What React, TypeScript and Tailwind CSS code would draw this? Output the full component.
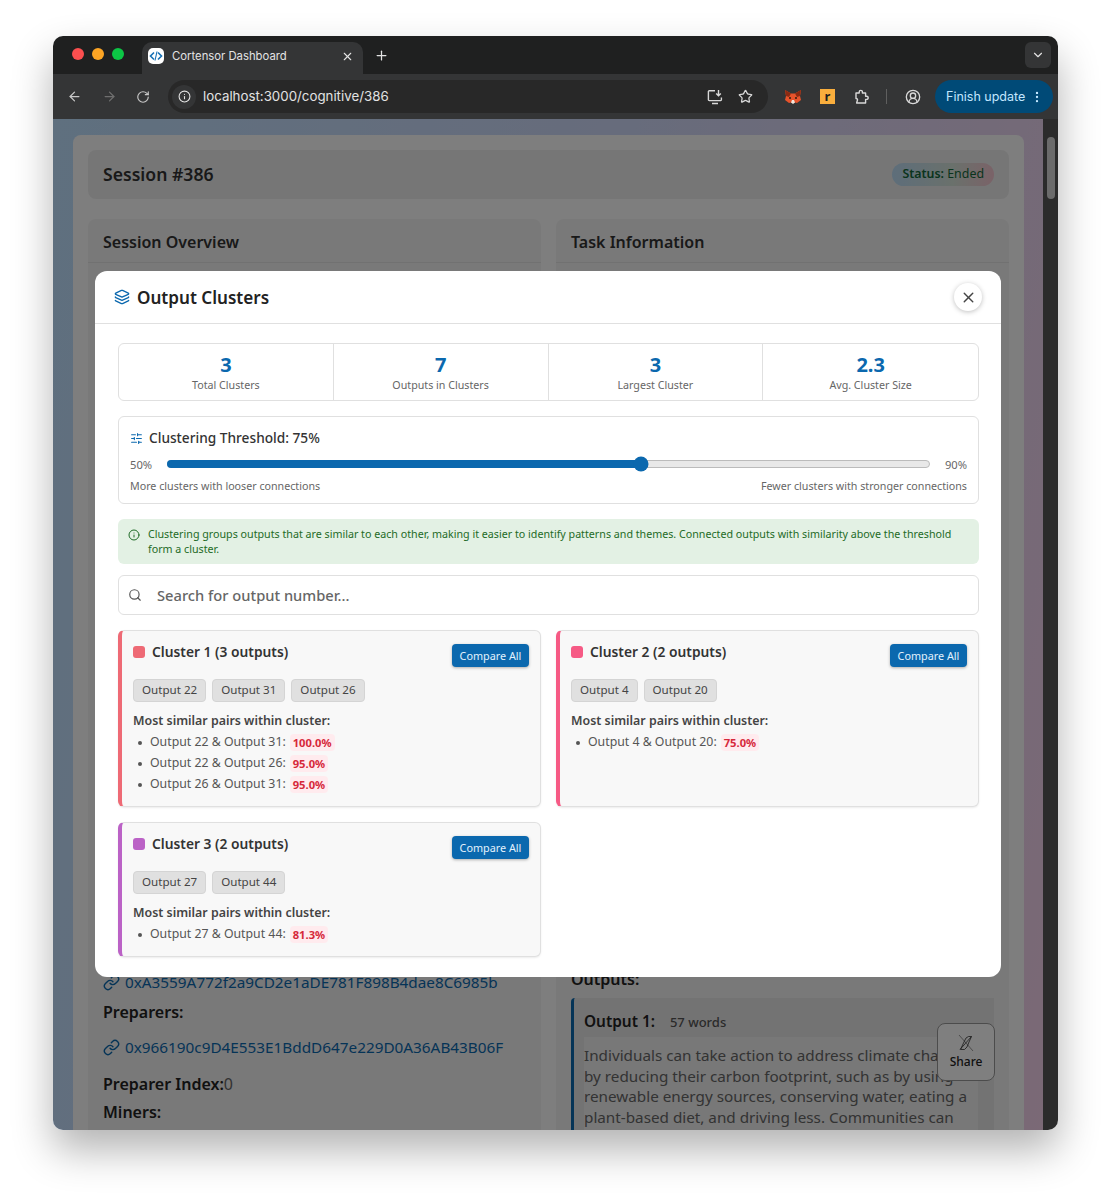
import {
  ArrowLeft,
  ArrowRight,
  ChevronDown,
  CircleUserRound,
  EllipsisVertical,
  Info,
  Layers,
  Link,
  Plus,
  RotateCw,
  Search,
  SlidersHorizontal,
  Star,
  X,
} from 'lucide-react'

const STATS = [
  { value: '3', label: 'Total Clusters' },
  { value: '7', label: 'Outputs in Clusters' },
  { value: '3', label: 'Largest Cluster' },
  { value: '2.3', label: 'Avg. Cluster Size' },
]

const CLUSTERS = [
  {
    title: 'Cluster 1 (3 outputs)',
    border: 'border-l-[#ee6a75]',
    dot: 'bg-[#ee6a75]',
    outputs: ['Output 22', 'Output 31', 'Output 26'],
    pairs: [
      { label: 'Output 22 & Output 31:', score: '100.0%' },
      { label: 'Output 22 & Output 26:', score: '95.0%' },
      { label: 'Output 26 & Output 31:', score: '95.0%' },
    ],
  },
  {
    title: 'Cluster 2 (2 outputs)',
    border: 'border-l-[#f65a85]',
    dot: 'bg-[#f65a85]',
    outputs: ['Output 4', 'Output 20'],
    pairs: [{ label: 'Output 4 & Output 20:', score: '75.0%' }],
  },
  {
    title: 'Cluster 3 (2 outputs)',
    border: 'border-l-[#bb62c6]',
    dot: 'bg-[#bb62c6]',
    outputs: ['Output 27', 'Output 44'],
    pairs: [{ label: 'Output 27 & Output 44:', score: '81.3%' }],
  },
]

function Favicon() {
  return (
    <span className="flex h-4 w-4 items-center justify-center rounded-[5px] bg-white">
      <svg width="14" height="14" viewBox="0 0 14 14" fill="none" stroke="#1670b5" strokeWidth="1.6">
        <path d="M5 3.5L1.5 7 5 10.5M9 3.5L12.5 7 9 10.5" />
        <path d="M8 2.5L6 11.5" strokeWidth="1.1" />
      </svg>
    </span>
  )
}

function FoxIcon() {
  return (
    <svg width="18" height="16" viewBox="0 0 18 16">
      <path d="M1 1l6 3.5h4L17 1l-1 6 1 4-4 3-2-.5H7L5 14l-4-3 1-4z" fill="#e8532b" />
      <path d="M1 1l6 3.5L5 8 2 7zM17 1l-6 3.5L13 8l3-1z" fill="#8c2a12" />
      <path d="M7 13.5L8 11h2l1 2.5-2 1.5z" fill="#f3e6dc" />
      <circle cx="6" cy="9" r="1" fill="#2b1a12" />
      <circle cx="12" cy="9" r="1" fill="#2b1a12" />
    </svg>
  )
}

function InstallIcon() {
  return (
    <svg width="16" height="16" viewBox="0 0 16 16" fill="none" stroke="#d8d8d8" strokeWidth="1.4">
      <path d="M8 1.7H2.2a.8.8 0 0 0-.8.8v8.3a.8.8 0 0 0 .8.8h11.4a.8.8 0 0 0 .8-.8V8.5" />
      <path d="M5 14.5h6M11.5 1v5.5M9.2 4.5l2.3 2.3 2.3-2.3" />
    </svg>
  )
}

function ExtensionIcon() {
  return (
    <svg width="16" height="16" viewBox="0 0 16 16" fill="none" stroke="#d8d8d8" strokeWidth="1.4" strokeLinejoin="round">
      <path d="M2 4h3.2V3a1.6 1.6 0 0 1 3.2 0v1h3.2v3.2h1a1.6 1.6 0 0 1 0 3.2h-1V14H2.6l.9-3v-.5c0-.5-.6-1-1.5-1z" />
    </svg>
  )
}

function BrowserChrome() {
  return (
    <>
      <div className="flex h-[38px] shrink-0 items-end bg-[#1f2020] pl-[19px] pr-[7px]">
        <div className="flex h-[38px] items-center gap-2 pb-[2px] pr-[18px]">
          <span className="h-3 w-3 rounded-full bg-[#fb4f4f]" />
          <span className="h-3 w-3 rounded-full bg-[#fda524]" />
          <span className="h-3 w-3 rounded-full bg-[#0cc645]" />
        </div>
        <div className="flex h-8 w-[221px] items-center rounded-t-[10px] bg-[#343536] pb-[4px] pl-[6px] pr-[9px] text-white">
          <Favicon />
          <span className="ml-[8px] flex-1 font-['Inter',sans-serif] text-[11.3px] text-[#e3e3e3]">Cortensor Dashboard</span>
          <X size={13} className="text-[#e3e3e3]" />
        </div>
        <div className="flex h-8 flex-1 items-center pb-[5px] pl-[11px]">
          <Plus size={15} className="text-[#e3e3e3]" />
        </div>
        <div className="mb-[6px] flex h-[26px] w-[26px] items-center justify-center rounded-md bg-[#343536]">
          <ChevronDown size={14} className="text-[#e3e3e3]" />
        </div>
      </div>
      <div className="flex h-[45px] shrink-0 items-center bg-[#343536] pl-[14px] pr-[5px] text-[#c7c7c7]">
        <ArrowLeft size={15} />
        <ArrowRight size={15} className="ml-[20px] text-[#6f6f6f]" />
        <RotateCw size={14} className="ml-[19px]" />
        <div className="ml-[18px] flex h-[33px] w-[600px] items-center rounded-full bg-[#282828] pl-1 pr-[15px]">
          <span className="flex h-6 w-6 items-center justify-center rounded-full bg-[#343536]">
            <Info size={13} className="text-[#e3e3e3]" />
          </span>
          <span className="ml-[7px] flex-1 font-['Inter',sans-serif] text-[13.3px] text-[#e3e3e3]">localhost:3000/cognitive/386</span>
          <InstallIcon />
          <Star size={15} className="ml-[15px] text-[#d8d8d8]" />
        </div>
        <span className="ml-4"><FoxIcon /></span>
        <span className="ml-[18px] flex h-[15px] w-[15px] items-center justify-center bg-[#f9ae3d] text-[13px] font-bold leading-none text-[#1f1f1f]">r</span>
        <span className="ml-[19px]"><ExtensionIcon /></span>
        <span className="ml-[16px] h-[15px] w-px bg-[#5f5f5f]" />
        <CircleUserRound size={16} className="ml-[18px] text-[#d8d8d8]" />
        <div className="ml-[14px] flex h-[33px] w-[118px] items-center justify-between rounded-full bg-[#004a77] pl-[11px] pr-[9px] pt-[1px] font-['Inter',sans-serif] text-[12.5px] text-[#c2e7ff]">
          Finish update
          <EllipsisVertical size={14} />
        </div>
      </div>
    </>
  )
}

function BackgroundPage() {
  return (
    <div className="h-[1011px] overflow-hidden bg-[linear-gradient(100deg,#bee0fe_0%,#cfd8f8_50%,#f6d2ec_100%)] pl-[20px] pr-[19px] pt-4">
      <div className="h-[1100px] rounded-t-lg bg-[#fdfdfd] px-[15px] pt-[15px]">
        <div className="flex h-[49px] items-center justify-between rounded-lg bg-[#ededed] px-[15px] pb-[1px]">
          <h1 className="text-[17.6px] font-semibold text-[#333]">Session #386</h1>
          <span className="mt-[1px] rounded-full bg-[linear-gradient(90deg,#bcdcf5,#d5e2d8_60%,#f5c5d0)] px-[10px] py-[2px] text-[12.4px] text-[#15683a]">
            <b className="font-semibold">Status:</b> Ended
          </span>
        </div>
        <div className="mt-5 grid grid-cols-2 gap-[15px]">
          <div className="h-[950px] rounded-t-lg bg-[#f2f2f2]">
            <h2 className="h-[44px] border-b border-[#e2e2e2] px-[15px] pt-[11px] text-base font-semibold text-[#333]">Session Overview</h2>
            <div className="h-[708px]" />
            <div className="px-[15px]">
              <div className="flex items-center gap-[5px] text-[15.3px] text-[#0b68ae]">
                <Link size={17} />
                0xA3559A772f2a9CD2e1aDE781F898B4dae8C6985b
              </div>
              <p className="mt-[6px] text-base font-semibold text-[#222]">Preparers:</p>
              <div className="mt-[12px] flex items-center gap-[5px] text-[15.3px] text-[#0b68ae]">
                <Link size={17} />
                0x966190c9D4E553E1BddD647e229D0A36AB43B06F
              </div>
              <p className="mt-[13px] text-base font-semibold text-[#222]">
                Preparer Index:<span className="font-normal text-[#666]">0</span>
              </p>
              <p className="mt-[4px] text-base font-semibold text-[#222]">Miners:</p>
            </div>
          </div>
          <div className="h-[950px] rounded-t-lg bg-[#f2f2f2]">
            <h2 className="h-[44px] border-b border-[#e2e2e2] px-[15px] pt-[11px] text-base font-semibold text-[#333]">Task Information</h2>
            <div className="h-[704px]" />
            <div className="px-[15px]">
              <p className="text-base font-semibold text-[#222]">Outputs:</p>
              <div className="mt-[7px] rounded-l border-l-[3px] border-[#0b68ae] bg-[#e6e6e6] pl-[10px] pr-4 pt-[12px]">
                <p className="text-[15.4px] font-semibold text-[#222]">
                  Output 1:<span className="ml-[15px] text-[13px] font-medium text-[#555]">57 words</span>
                </p>
                <p className="mt-[4px] bg-[#f0f0f0] pb-6 pt-2 text-[15.25px] leading-[20.6px] text-[#666] whitespace-nowrap">
                  Individuals can take action to address climate change
                  <br />
                  by reducing their carbon footprint, such as by using
                  <br />
                  renewable energy sources, conserving water, eating a
                  <br />
                  plant-based diet, and driving less. Communities can
                </p>
              </div>
            </div>
          </div>
        </div>
      </div>
    </div>
  )
}

function ShareButton() {
  return (
    <div className="absolute left-[884px] top-[904px] flex h-[58px] w-[58px] flex-col items-center justify-center rounded-lg border border-[#999] bg-[#fff] text-xs font-medium text-[#222]">
      <svg width="18" height="18" viewBox="0 0 18 18" fill="none" stroke="#333" strokeWidth="0.8">
        <path d="M2 1l14 16" strokeWidth="0.5" />
        <path d="M14.5 2.5L3 15.5M3.5 15.5l3-6.5L9 4l2.500-1.500h3L12 8l-2 5-2.500 2.500z" />
      </svg>
      <span className="mt-[2px]">Share</span>
    </div>
  )
}

function StatsBar() {
  return (
    <div className="grid h-[58px] grid-cols-4 rounded-md border border-[#e0e0e0]">
      {STATS.map((s, i) => (
        <div key={s.label} className={`flex flex-col items-center justify-center pt-[1px] ${i < 3 ? 'border-r border-[#e0e0e0]' : ''}`}>
          <span className="text-xl font-bold leading-[26px] text-[#0b68ae]">{s.value}</span>
          <span className="text-[10.7px] leading-[15px] text-[#666]">{s.label}</span>
        </div>
      ))}
    </div>
  )
}

function ThresholdCard() {
  return (
    <div className="mt-[15px] h-[88px] rounded-md border border-[#e0e0e0] pl-[11px] pr-[11px] pt-[11px]">
      <div className="flex items-center gap-[6px] text-[13.7px] font-medium leading-[20px] text-[#333]">
        <SlidersHorizontal size={13} className="text-[#0b68ae]" />
        Clustering Threshold: 75%
      </div>
      <div className="mt-[8px] flex items-center text-[11.2px] leading-[15px] text-[#666]">
        <span className="w-[37px] pt-[1px]">50%</span>
        <div className="relative h-2 flex-1 rounded-full border border-[#bbb] bg-[#e8e8e8]">
          <div className="absolute -left-px -top-px h-2 w-[62.3%] rounded-full bg-[#0b68ae]" />
          <div className="absolute left-[62.2%] top-1/2 h-[15px] w-[15px] -translate-x-1/2 -translate-y-1/2 rounded-full bg-[#0b68ae]" />
        </div>
        <span className="w-[37px] pt-[1px] text-right">90%</span>
      </div>
      <div className="mt-[7px] flex justify-between text-[10.7px] leading-[15px] text-[#666]">
        <span>More clusters with looser connections</span>
        <span>Fewer clusters with stronger connections</span>
      </div>
    </div>
  )
}

function ClusterCard({ cluster }: { cluster: (typeof CLUSTERS)[number] }) {
  return (
    <div className={`rounded-md border border-[#e0e0e0] border-l-[4px] bg-[#f8f8f8] pb-[11px] pl-[11px] pr-[11px] pt-[13px] shadow-[0_1px_2px_rgba(0,0,0,0.08)] ${cluster.border}`}>
      <div className="flex items-start justify-between">
        <div className="-mt-[1px] flex items-center gap-[7px] text-[13.8px] font-semibold leading-[18px] text-[#333]">
          <span className={`h-3 w-3 rounded-[3px] ${cluster.dot}`} />
          {cluster.title}
        </div>
        <button type="button" className="flex h-[23px] w-[77px] items-center justify-center rounded bg-[#0b68ae] pt-[1px] text-[10.8px] text-[#e3f2fd] shadow-[0_1px_3px_rgba(0,0,0,0.3)]">
          Compare All
        </button>
      </div>
      <div className="mt-3 flex gap-[6px]">
        {cluster.outputs.map((o) => (
          <span key={o} className="flex h-[23px] items-center rounded border border-[#d4d4d4] bg-[#e0e0e0] px-2 pb-[1px] text-[11.6px] text-[#444]">
            {o}
          </span>
        ))}
      </div>
      <p className="mt-[10px] text-[12.4px] font-semibold leading-[18px] text-[#444]">Most similar pairs within cluster:</p>
      <ul className="mt-[2px] flex flex-col">
        {cluster.pairs.map((p) => (
          <li key={p.label} className="flex h-[21px] items-center text-[12.3px] text-[#555]">
            <span className="ml-[5px] mr-[8px] h-1 w-1 rounded-full bg-[#555]" />
            {p.label}
            <span className="mb-[1px] ml-1 rounded-sm bg-[#ffebee] px-[3px] text-[11.2px] font-bold leading-[17px] text-[#d6283a]">{p.score}</span>
          </li>
        ))}
      </ul>
    </div>
  )
}

function ClustersModal() {
  return (
    <div className="absolute left-[42px] top-[152px] h-[706px] w-[906px] rounded-xl bg-white">
      <div className="flex h-[53px] items-center justify-between border-b border-[#e0e0e0] pl-[19px] pr-[19px]">
        <div className="flex items-center gap-[7px] pt-[1px] text-[17.1px] font-semibold text-[#222]">
          <Layers size={16} className="text-[#0b68ae]" />
          Output Clusters
        </div>
        <button type="button" className="flex h-7 w-7 items-center justify-center rounded-full bg-white shadow-[0_1px_5px_rgba(0,0,0,0.25)]">
          <X size={17} className="text-[#444]" />
        </button>
      </div>
      <div className="pl-[23px] pr-[22px] pt-[19px]">
        <StatsBar />
        <ThresholdCard />
        <div className="mt-[15px] flex h-[45px] gap-[8px] rounded-md bg-[#e3f1e4] pl-[10px] pr-6 pt-[8px] text-[10.7px] leading-[15px] text-[#1e6b26]">
          <Info size={12} className="mt-[2px] shrink-0" />
          <p>
            Clustering groups outputs that are similar to each other, making it easier to identify patterns and themes. Connected outputs with similarity above the threshold form a cluster.
          </p>
        </div>
        <div className="mt-[11px] flex h-10 items-center rounded-md border border-[#e0e0e0] pl-[9px] text-[14.7px] font-medium text-[#666]">
          <Search size={14} className="mr-[15px] text-[#555]" />
          Search for output number...
        </div>
        <div className="mt-[15px] grid grid-cols-2 gap-[15px]">
          {CLUSTERS.map((c) => (
            <ClusterCard key={c.title} cluster={c} />
          ))}
        </div>
      </div>
    </div>
  )
}

export default function App() {
  return (
    <div className="h-[1200px] w-[1111px] bg-white pl-[53px] pt-[36px] font-['Noto_Sans',sans-serif]">
      <div className="flex h-[1094px] w-[1005px] flex-col overflow-hidden rounded-[10px] shadow-[0_20px_40px_rgba(0,0,0,0.3)]">
        <BrowserChrome />
        <div className="relative flex min-h-0 flex-1">
          <div className="relative min-w-0 flex-1">
            <BackgroundPage />
            <ShareButton />
          </div>
          <div className="w-[15px] bg-[#2b2b2b] pl-[4px] pt-[18px]">
            <div className="h-[62px] w-2 rounded-full bg-[#6b6b6b]" />
          </div>
          <div className="absolute inset-y-0 left-0 right-[15px] bg-black/50" />
          <ClustersModal />
        </div>
      </div>
    </div>
  )
}
